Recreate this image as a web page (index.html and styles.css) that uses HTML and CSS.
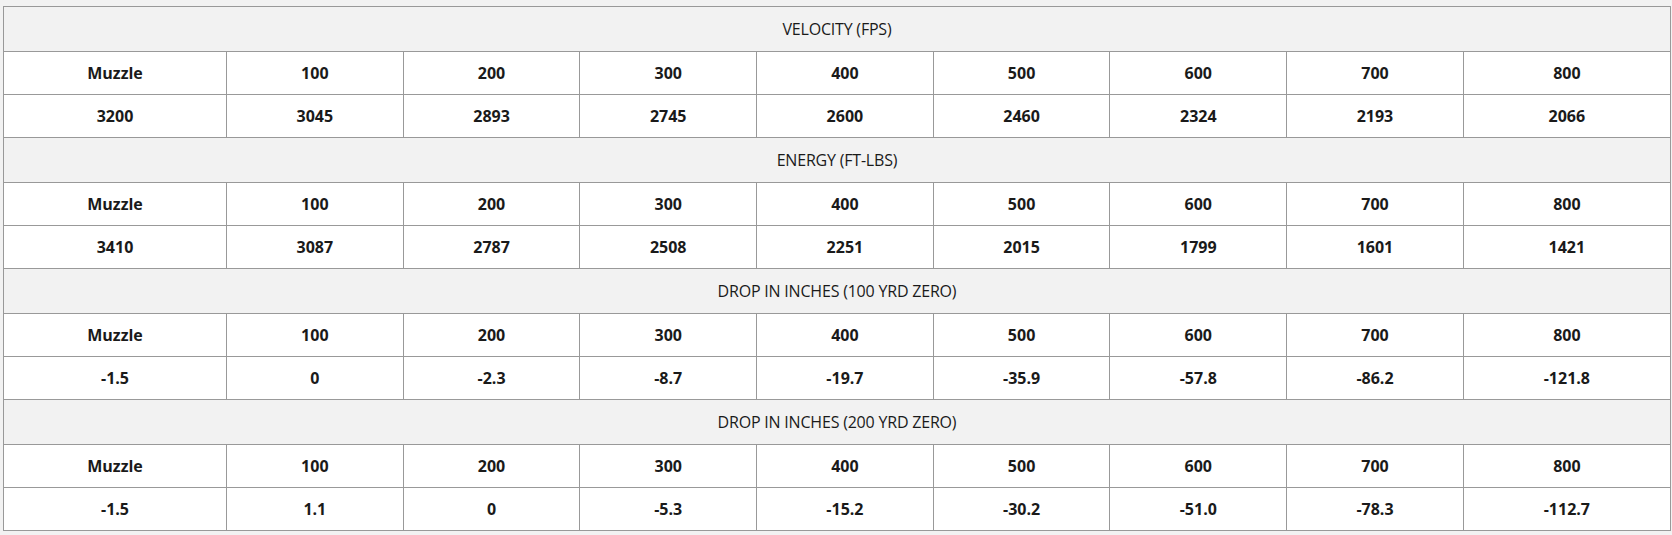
FILE: index.html
```html
<!DOCTYPE html>
<html>
<head>
<meta charset="utf-8">
<link rel="stylesheet" href="styles.css">
</head>
<body>
<table class="ballistics">
  <colgroup>
    <col class="c-first">
    <col class="c-mid"><col class="c-mid"><col class="c-mid"><col class="c-mid">
    <col class="c-mid"><col class="c-mid"><col class="c-mid">
    <col class="c-last">
  </colgroup>
  <tbody>
    <tr class="section"><td colspan="9">VELOCITY (FPS)</td></tr>
    <tr class="data"><td>Muzzle</td><td>100</td><td>200</td><td>300</td><td>400</td><td>500</td><td>600</td><td>700</td><td>800</td></tr>
    <tr class="data"><td>3200</td><td>3045</td><td>2893</td><td>2745</td><td>2600</td><td>2460</td><td>2324</td><td>2193</td><td>2066</td></tr>
    <tr class="section"><td colspan="9">ENERGY (FT-LBS)</td></tr>
    <tr class="data"><td>Muzzle</td><td>100</td><td>200</td><td>300</td><td>400</td><td>500</td><td>600</td><td>700</td><td>800</td></tr>
    <tr class="data"><td>3410</td><td>3087</td><td>2787</td><td>2508</td><td>2251</td><td>2015</td><td>1799</td><td>1601</td><td>1421</td></tr>
    <tr class="section"><td colspan="9">DROP IN INCHES (100 YRD ZERO)</td></tr>
    <tr class="data"><td>Muzzle</td><td>100</td><td>200</td><td>300</td><td>400</td><td>500</td><td>600</td><td>700</td><td>800</td></tr>
    <tr class="data"><td>-1.5</td><td>0</td><td>-2.3</td><td>-8.7</td><td>-19.7</td><td>-35.9</td><td>-57.8</td><td>-86.2</td><td>-121.8</td></tr>
    <tr class="section"><td colspan="9">DROP IN INCHES (200 YRD ZERO)</td></tr>
    <tr class="data"><td>Muzzle</td><td>100</td><td>200</td><td>300</td><td>400</td><td>500</td><td>600</td><td>700</td><td>800</td></tr>
    <tr class="data"><td>-1.5</td><td>1.1</td><td>0</td><td>-5.3</td><td>-15.2</td><td>-30.2</td><td>-51.0</td><td>-78.3</td><td>-112.7</td></tr>
  </tbody>
</table>
</body>
</html>
```

FILE: styles.css
```css
html, body {
  margin: 0;
  background: #f2f2f2;
}
body {
  padding: 6px 3px 0 3px;
  font-family: "Open Sans", "Liberation Sans", sans-serif;
  color: #1a1a1a;
}
.ballistics {
  border-collapse: collapse;
  table-layout: fixed;
  width: 1667px;
}
.c-first { width: 223px; }
.c-mid { width: 176.7px; }
.c-last { width: 207.1px; }
.ballistics td {
  border: 1px solid #999;
  text-align: center;
  vertical-align: middle;
  padding: 0;
  font-size: 16px;
  line-height: 22px;
}
.section td {
  background: #f2f2f2;
  font-weight: 500;
  font-size: 16px;
  letter-spacing: -0.2px;
  height: 44px;
}
.data td {
  background: #fff;
  font-weight: 700;
  height: 42px;
}
```
